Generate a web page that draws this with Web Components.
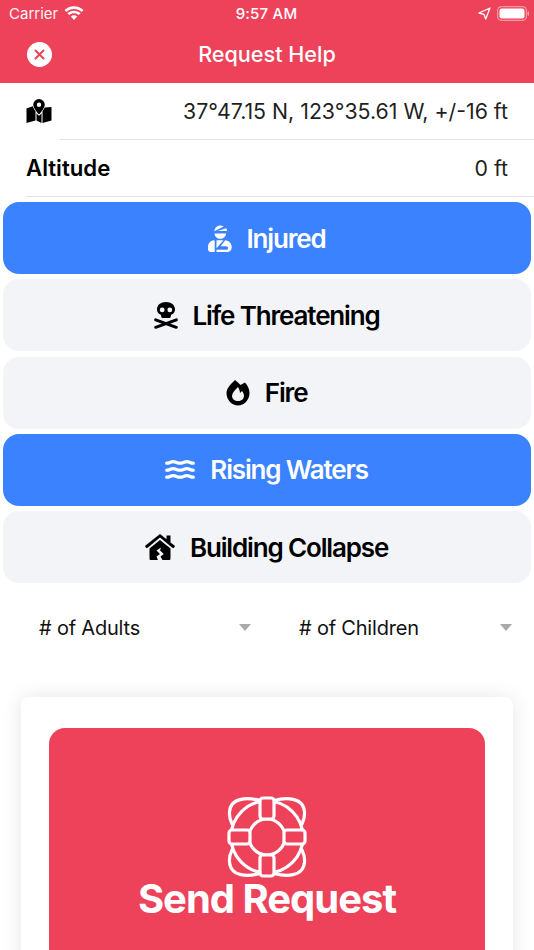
<!DOCTYPE html>
<html>
<head>
<meta charset="utf-8">
<title>Request Help</title>
<style>
	html, body { margin: 0; padding: 0; background: #fff; }
	body { width: 534px; height: 950px; overflow: hidden; font-family: Inter, "Liberation Sans", sans-serif; color: #000; }
	.choices { display: flex; flex-direction: column; gap: 5.3px; padding: 5px 3px 0; }
	.pickers { display: grid; grid-template-columns: 212px 213px; column-gap: 48px; padding: 24px 22px 0 39px; }
</style>
</head>
<body>
<app-header title="Request Help"></app-header>
<info-row divider="60"><svg slot="label" width="26" height="24" viewBox="0 0 26 24"><path fill="#000" fill-rule="evenodd" d="M13 0a5.800 5.800 0 0 0-5.800 5.800c0 2.700 3.600 7.300 5.100 9a.9.9 0 0 0 1.400 0c1.500-1.700 5.100-6.300 5.100-9A5.800 5.800 0 0 0 13 0zm0 3.600a2.200 2.200 0 1 1 0 4.400 2.200 2.200 0 0 1 0-4.400z"/><path fill="#000" d="M.5 9.500l6.300-2.300c.6 2 2 4 2.700 5V21.500L.5 24zM10.500 14.200c.6.800 1.200 1.500 1.700 2 .5.400 1.100.4 1.600 0 .5-.5 1.100-1.200 1.700-2V24l-5-2.500zM25.500 8v13.500L16.500 24V12.200c.7-1 1.500-2.400 2.200-3.800z"/></svg>37°47.15 N, 123°35.61 W, +/-16 ft</info-row>
<info-row divider="26"><b slot="label">Altitude</b>0 ft</info-row>
<div class="choices">
	<choice-button active><svg slot="icon" width="24" height="27" viewBox="0 0 24 27"><path fill="currentColor" d="M6.400 6.300C6.500 3 9 .5 12.300.5c1.300 0 2.500.4 3.500 1.100zM18.100 3.300c.6.900.9 1.800 1 2.700H9.800zM6.500 8.400h11.600c-.2 3.100-2.700 5.400-5.800 5.400S6.700 11.500 6.500 8.400z"/><path fill="currentColor" d="M5.600 15.300c.7 0 1.100.4 1.100 1V27H3c-1.600 0-3-1.300-3-3v-2.200c0-3 2.300-6 5.600-6.500zM8.500 15.300h7l-7 8zM17.200 15.300c3.700.4 6.500 3.200 6.500 6.500v.7c0 2.500-2 4.500-4.500 4.500H8.500v-2.200h9.700c1.100 0 1.900-.8 1.900-1.800s-.8-1.800-1.900-1.800h-5.500z"/></svg>Injured</choice-button>
	<choice-button><svg slot="icon" width="24" height="27" viewBox="0 0 24 27"><path fill="currentColor" fill-rule="evenodd" d="M12 0C6.800 0 3 3 3 7.400c0 2.200 1 3.800 2.900 4.800.8.400 1.300 1 1.300 1.800v.6c0 .8.600 1.400 1.400 1.400h6.800c.8 0 1.400-.6 1.400-1.400V14c0-.8.500-1.400 1.300-1.800C20 11.200 21 9.600 21 7.400 21 3 17.200 0 12 0zM8.200 5.500a2.400 2.400 0 1 1 0 4.800 2.400 2.400 0 0 1 0-4.800zm7.600 0a2.400 2.400 0 1 1 0 4.800 2.400 2.400 0 0 1 0-4.800z"/><path fill="none" stroke="currentColor" stroke-width="3" stroke-linecap="round" d="M1.700 17.800L22.300 25.300M22.300 17.800L1.700 25.300"/></svg>Life Threatening</choice-button>
	<choice-button><svg slot="icon" width="24" height="27" viewBox="0 0 24 27"><path fill="currentColor" fill-rule="evenodd" d="M9 1c2 2 4 3 5.500 5L19 3.500c2.500 2.500 4.500 6.500 4.500 10.500 0 7-5.500 12.500-11.500 12.500S.5 21 .5 14C.5 9 5 5 9 1zM12 8c-3 3-6 6-6 9 0 3 3 5 6 5s6-2 6-5c0-2-1-4-2-5l-2 2c0-2-1-4-2-6z"/></svg>Fire</choice-button>
	<choice-button active><svg slot="icon" width="30" height="20" viewBox="0 0 30 20"><g fill="none" stroke="currentColor" stroke-width="3.200" stroke-linecap="round"><path d="M1.700 3.200c3.200 0 3.200-1.500 6.500-1.500s3.300 1.500 6.800 1.500 3.400-1.500 6.800-1.500 3.200 1.500 6.500 1.500"/><path d="M1.700 10.200c3.200 0 3.200-1.500 6.500-1.500s3.300 1.500 6.800 1.500 3.400-1.500 6.800-1.500 3.200 1.500 6.500 1.500"/><path d="M1.700 17.200c3.200 0 3.200-1.500 6.500-1.500s3.300 1.500 6.800 1.500 3.400-1.500 6.800-1.500 3.200 1.500 6.500 1.500"/></g></svg>Rising Waters</choice-button>
	<choice-button><svg slot="icon" width="30" height="26" viewBox="0 0 30 26"><path fill="currentColor" fill-rule="evenodd" d="M15 0l6.500 5.200V1.500h4v6.900l4 3.200c.4.300.5.800.2 1.200l-.8 1c-.3.400-.8.400-1.200.1L15 3.500 2.300 13.900c-.4.300-.9.300-1.200-.1l-.8-1c-.3-.4-.2-.9.200-1.200zM15 6l10.500 8.400v10c0 .9-.7 1.600-1.600 1.600h-6.400l-2-3.500 3.300-2.500-3.800-3.500 1-3-4.500 3 3.500 3.500-3.500 2.500 1.400 3.500H6.100c-.9 0-1.600-.7-1.600-1.600v-10z"/></svg>Building Collapse</choice-button>
</div>
<div class="pickers">
	<picker-field># of Adults</picker-field>
	<picker-field># of Children</picker-field>
</div>
<send-card>Send Request</send-card>

<script>
class AppHeader extends HTMLElement
{
	constructor()
	{
		super();
		this.attachShadow({ mode: "open" });
		this.shadowRoot.innerHTML = `
			<style>
				:host { display: block; height: 83px; background: #ed425a; color: #fff; }
				.status { height: 27px; display: grid; grid-template-columns: 200px 1fr 206px; align-items: center; padding: 0 4px 0 9px; font-size: 15px; }
				.left, .right { display: flex; align-items: center; }
				.left { gap: 6px; }
				.right { justify-content: flex-end; gap: 6px; }
				.time { font-weight: 500; letter-spacing: 0.2px; text-align: center; }
				.carrier { opacity: .95; }
				.nav { height: 54px; display: flex; align-items: center; justify-content: center; position: relative; font-size: 21.6px; font-weight: 500; }
				.close { position: absolute; left: 27px; top: 15px; width: 25px; height: 25px; display: block; }
			</style>
			<div class="status">
				<div class="left">
					<span class="carrier">Carrier</span>
					<svg width="20" height="15" viewBox="0 0 20 15" fill="#fff"><path d="M10 3c3 0 5.500 1 7.700 3l1.800-1.900C17 1.600 13.700.3 10 .3S3 1.600.5 4.100L2.300 6C4.500 4 7 3 10 3z"/><path d="M10 7.300c1.900 0 3.400.6 4.800 1.800l1.800-1.900C14.800 5.600 12.500 4.700 10 4.700S5.200 5.600 3.400 7.200l1.800 1.900C6.600 7.900 8.100 7.300 10 7.300z"/><path d="M10 9.200c-1.200 0-2.300.5-3.200 1.200L10 14l3.200-3.600c-.9-.7-2-1.200-3.200-1.200z"/></svg>
				</div>
				<div class="time">9:57 AM</div>
				<div class="right">
					<svg width="13" height="13" viewBox="0 0 13 13"><path fill="none" stroke="#fff" stroke-width="1.300" stroke-linejoin="round" d="M12 1L1 6l5 1.300L7.700 12z"/></svg>
					<svg width="33" height="15" viewBox="0 0 33 15"><rect x=".6" y=".6" width="28.800" height="13.800" rx="4" fill="none" stroke="#fff" stroke-opacity=".45" stroke-width="1.200"/><rect x="2.500" y="2.500" width="25" height="10" rx="2.200" fill="#fff"/><rect x="30.500" y="5.200" width="1.500" height="4.600" rx=".7" fill="#fff" fill-opacity=".5"/></svg>
				</div>
			</div>
			<div class="nav">
				<svg class="close" viewBox="0 0 25 25"><circle cx="12.500" cy="12.500" r="12.500" fill="#fff"/><path d="M8.500 8.500l8 8M16.500 8.500l-8 8" stroke="#ed425a" stroke-width="2" stroke-linecap="round"/></svg>
				<span id="title"></span>
			</div>
		`;
		this.shadowRoot.getElementById("title").textContent = this.getAttribute("title");
	}
}

class InfoRow extends HTMLElement
{
	constructor()
	{
		super();
		this.attachShadow({ mode: "open" });
		this.shadowRoot.innerHTML = `
			<style>
				:host { display: block; position: relative; height: 57px; font-size: 21.3px; color: #1f1f1f; }
				.row { height: 55px; display: flex; align-items: center; justify-content: space-between; padding: 0 26px 0 26px; }
				::slotted(b) { color: #000; font-weight: 600; font-size: 22.2px; }
				::slotted(svg) { display: block; }
				.line { position: absolute; right: 0; bottom: 0; height: 1px; background: #e2e2e4; }
			</style>
			<div class="row"><slot name="label"></slot><span><slot></slot></span></div>
			<div class="line"></div>
		`;
		this.shadowRoot.querySelector(".line").style.left = this.getAttribute("divider") + "px";
	}
}

class ChoiceButton extends HTMLElement
{
	constructor()
	{
		super();
		this.attachShadow({ mode: "open" });
		this.shadowRoot.innerHTML = `
			<style>
				:host { display: flex; align-items: center; justify-content: center; gap: 15px; height: 72px; border-radius: 16px; background: #f3f4f8; color: #000; font-size: 26px; font-weight: 600; letter-spacing: -1.150px; }
				:host([active]) { background: #3a82ff; color: #fff; }
				::slotted(svg) { display: block; flex: none; }
				span { margin-right: .8px; }
			</style>
			<slot name="icon"></slot><span><slot></slot></span>
		`;
	}
}

class PickerField extends HTMLElement
{
	constructor()
	{
		super();
		this.attachShadow({ mode: "open" });
		this.shadowRoot.innerHTML = `
			<style>
				:host { display: flex; align-items: center; justify-content: space-between; height: 42px; font-size: 20px; letter-spacing: -0.2px; color: #111; }
				i { display: block; width: 0; height: 0; border-left: 6.500px solid transparent; border-right: 6.500px solid transparent; border-top: 7px solid #aaa; margin-top: -2px; }
			</style>
			<span><slot></slot></span><i></i>
		`;
	}
}

class SendCard extends HTMLElement
{
	constructor()
	{
		super();
		this.attachShadow({ mode: "open" });
		this.shadowRoot.innerHTML = `
			<style>
				:host { display: block; margin: 48px 21px 0; height: 300px; padding: 31px 28px 0; background: #fff; border-radius: 8px; box-shadow: 0 0 20px rgba(0,0,0,.1); }
				.btn { height: 270px; background: #ed425a; border-radius: 16px; color: #fff; display: flex; flex-direction: column; align-items: center; padding-top: 68px; box-sizing: border-box; font-size: 40px; font-weight: 700; letter-spacing: -1px; line-height: 47px; }
				svg { display: block; margin-bottom: -3px; }
			</style>
			<div class="btn">
				<svg width="80" height="82" viewBox="0 0 80 82" fill="none" stroke="#fff" stroke-width="3.200" stroke-linejoin="round" stroke-linecap="round">
					<path d="M33 4.500C22 1.500 3.500 .5 2.500 16c-.3 4 .5 8 2.500 12"/>
					<path d="M47 4.500C58 1.500 76.500 .5 77.500 16c.3 4-.5 8-2.500 12"/>
					<path d="M33 77.500C22 80.500 3.500 81.500 2.500 66c-.3-4 .5-8 2.500-12"/>
					<path d="M47 77.500C58 80.500 76.500 81.500 77.500 66c.3-4-.5-8-2.500-12"/>
					<circle cx="40" cy="41" r="36"/>
					<circle cx="40" cy="41" r="18"/>
					<rect x="33" y="2" width="14" height="21" rx="3" fill="#ed425a"/>
					<rect x="33" y="59" width="14" height="21" rx="3" fill="#ed425a"/>
					<rect x="2" y="34" width="21" height="14" rx="3" fill="#ed425a"/>
					<rect x="57" y="34" width="21" height="14" rx="3" fill="#ed425a"/>
				</svg>
				<span><slot></slot></span>
			</div>
		`;
	}
}

customElements.define("app-header", AppHeader);
customElements.define("info-row", InfoRow);
customElements.define("choice-button", ChoiceButton);
customElements.define("picker-field", PickerField);
customElements.define("send-card", SendCard);
</script>
</body>
</html>
